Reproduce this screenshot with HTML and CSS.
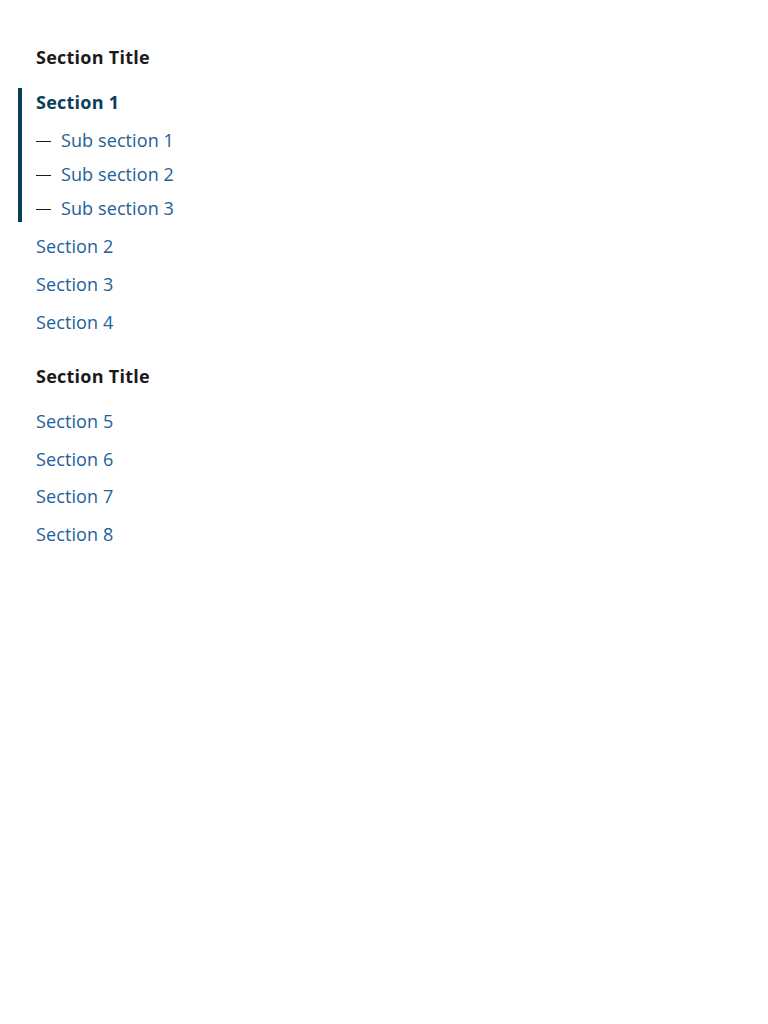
FILE: index.html
```html
<!DOCTYPE html>
<html lang="en">
<head>
<meta charset="utf-8">
<title>Side navigation</title>
<link rel="stylesheet" href="styles.css">
</head>
<body>
<nav class="sidenav">
  <h2 class="sidenav-title">Section Title</h2>
  <ul class="sidenav-list">
    <li class="sidenav-item is-current">
      <a class="sidenav-link is-current-link" href="#">Section 1</a>
      <ul class="sidenav-sublist">
        <li class="sidenav-subitem"><a class="sidenav-sublink" href="#">Sub section 1</a></li>
        <li class="sidenav-subitem"><a class="sidenav-sublink" href="#">Sub section 2</a></li>
        <li class="sidenav-subitem"><a class="sidenav-sublink" href="#">Sub section 3</a></li>
      </ul>
    </li>
    <li class="sidenav-item"><a class="sidenav-link" href="#">Section 2</a></li>
    <li class="sidenav-item"><a class="sidenav-link" href="#">Section 3</a></li>
    <li class="sidenav-item"><a class="sidenav-link" href="#">Section 4</a></li>
  </ul>
  <h2 class="sidenav-title sidenav-title-second">Section Title</h2>
  <ul class="sidenav-list sidenav-list-second">
    <li class="sidenav-item"><a class="sidenav-link sidenav-link-tight" href="#">Section 5</a></li>
    <li class="sidenav-item"><a class="sidenav-link sidenav-link-tight" href="#">Section 6</a></li>
    <li class="sidenav-item"><a class="sidenav-link sidenav-link-tight" href="#">Section 7</a></li>
    <li class="sidenav-item"><a class="sidenav-link sidenav-link-tight" href="#">Section 8</a></li>
  </ul>
</nav>
</body>
</html>
```

FILE: styles.css
```css
html, body {
  margin: 0;
  padding: 0;
  background: #ffffff;
}

body {
  font-family: "Open Sans", "Noto Sans", "Liberation Sans", sans-serif;
  font-size: 18px;
  color: #1b1b1b;
}

.sidenav {
  padding: 45px 0 0 18px;
}

.sidenav-title {
  margin: 0;
  padding-left: 18px;
  font-size: 18px;
  line-height: 24px;
  font-weight: 700;
  letter-spacing: 0.25px;
  color: #1b1b1b;
}

.sidenav-title-second {
  margin-top: 23px;
}

.sidenav-list {
  list-style: none;
  margin: 19px 0 0 0;
  padding: 0;
}

.sidenav-list-second {
  margin-top: 15.5px;
}

.sidenav-item {
  padding-left: 18px;
}

.sidenav-item.is-current {
  border-left: 4px solid #0b3d5c;
  padding: 2px 0 2.5px 14px;
  margin-bottom: 4.5px;
}

.sidenav-link {
  display: block;
  padding: 7px 0;
  line-height: 24px;
  color: #23609b;
  text-decoration: none;
  letter-spacing: 0.1px;
}

.sidenav-link-tight {
  line-height: 23.6px;
}

.sidenav-link.is-current-link {
  padding: 0;
  line-height: 24px;
  font-weight: 700;
  letter-spacing: 0.25px;
  color: #0b3d5c;
}

.sidenav-sublist {
  list-style: none;
  margin: 13.5px 0 0 0;
  padding: 0;
  display: flex;
  flex-direction: column;
  gap: 10px;
}

.sidenav-sublink {
  display: block;
  line-height: 24px;
  color: #23609b;
  text-decoration: none;
  letter-spacing: 0.1px;
}

.sidenav-sublink::before {
  content: "";
  display: inline-block;
  width: 15px;
  height: 1px;
  margin-right: 10px;
  background: #1b1b1b;
  vertical-align: middle;
}
```
